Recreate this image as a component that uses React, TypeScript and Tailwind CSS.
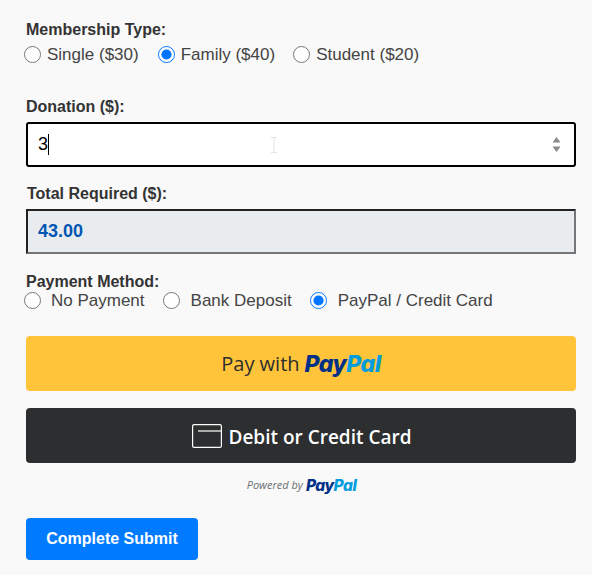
import React from "react";

function Radio({ checked, className = "" }: { checked?: boolean; className?: string }) {
  return (
    <input
      type="radio"
      readOnly
      checked={!!checked}
      className={"m-0 h-[17px] w-[17px] shrink-0 accent-[#0075ff] " + className}
    />
  );
}

function PayPalWord({ className }: { className: string }) {
  return (
    <span className={"font-['Inter',sans-serif] font-extrabold italic tracking-[-0.5px] " + className}>
      <span className="text-[#003087]">Pay</span>
      <span className="text-[#009cde]">Pal</span>
    </span>
  );
}

export default function App() {
  return (
    <div className="min-h-[575px] bg-[#f9f9f9] pl-[26px] pr-4 pt-[19px] font-['Liberation_Sans',Arial,sans-serif] text-[16px] text-[#333]">
      <div className="h-[20px] font-bold leading-[22px]">Membership Type:</div>
      <div className="mt-[5px] flex h-[20px] items-center text-[17px] text-[#444]">
        <Radio className="-ml-[2px]" />
        <span className="ml-[6px] pt-[2px] leading-[20px]">Single ($30)</span>
        <Radio checked className="ml-[19px]" />
        <span className="ml-[6px] pt-[2px] leading-[20px]">Family ($40)</span>
        <Radio className="ml-[18px]" />
        <span className="ml-[6px] pt-[2px] leading-[20px]">Student ($20)</span>
      </div>

      <div className="mt-[32px] h-[20px] font-bold leading-[22px]">Donation ($):</div>
      <div className="relative mt-[6px] flex h-[45px] w-[550px] items-center justify-between rounded-[3px] border-2 border-black bg-white pl-[10px] pr-[13px]">
        <div className="flex items-center text-[18px] text-black">
          <span>3</span>
          <span className="h-[21px] w-px bg-black" />
        </div>
        <svg className="absolute left-[243px] top-[13px]" width="7" height="16" viewBox="0 0 7 16" fill="none" stroke="#e4e4e4" aria-hidden="true">
          <path d="M0 0.500H6M3 0.500V15.500M0 15.500H6" />
        </svg>
        <svg width="9" height="17" viewBox="0 0 9 17" aria-hidden="true">
          <path d="M4.500 1 8.500 6.500H0.500Z" fill="#8a8a8a" />
          <path d="M0.500 10.500H8.500L4.500 16Z" fill="#8a8a8a" />
        </svg>
      </div>

      <div className="ml-px mt-[16px] h-[20px] font-bold leading-[22px]">Total Required ($):</div>
      <div className="mt-[6px] flex h-[45px] w-[550px] items-center border-2 border-b-[#767676] border-l-[#222] border-r-[#767676] border-t-[#222] bg-[#e9ecef] pl-[10px] text-[18px] font-bold text-[#0056b3]">
        43.00
      </div>

      <div className="mt-[17px] h-[20px] font-bold leading-[22px]">Payment Method:</div>
      <div className="flex h-[18px] items-center text-[17px] text-[#444]">
        <Radio className="-ml-[2px]" />
        <span className="ml-[10px] pt-[2px] leading-[18px]">No Payment</span>
        <Radio className="ml-[18px]" />
        <span className="ml-[11px] pt-[2px] leading-[18px]">Bank Deposit</span>
        <Radio checked className="ml-[18px]" />
        <span className="ml-[11px] pt-[2px] leading-[18px]">PayPal / Credit Card</span>
      </div>

      <div className="mt-[27px] flex h-[55px] w-[550px] items-center justify-center gap-[5px] rounded-[4px] bg-[#ffc439]">
        <span className="font-['Open_Sans',sans-serif] text-[20px] leading-[28px] text-[#2c2e2f]">Pay with</span>
        <PayPalWord className="text-[23px] leading-[26px]" />
      </div>
      <div className="mt-[17px] flex h-[55px] w-[550px] items-center justify-center gap-[6px] rounded-[4px] bg-[#2c2e2f] pl-[2px]">
        <svg width="30" height="24" viewBox="0 0 30 24" fill="none" stroke="#fff" strokeWidth="1.200" aria-hidden="true">
          <rect x="0.600" y="0.600" width="28.800" height="22.800" rx="1.500" />
          <path d="M6 7H29.400" />
        </svg>
        <span className="pt-[3px] font-['Open_Sans',sans-serif] text-[19px] font-semibold text-white">Debit or Credit Card</span>
      </div>
      <div className="mt-[13px] flex h-[18px] w-[550px] items-center justify-center gap-[3px] pl-[1px]">
        <span className="font-['Open_Sans',sans-serif] text-[11px] italic text-[#6b7074]">Powered by</span>
        <PayPalWord className="pt-[1px] text-[15.500px]" />
      </div>

      <div className="mt-[24px] flex h-[42px] w-[172px] items-center justify-center rounded-[4px] bg-[#007bff] font-bold text-white">
        Complete Submit
      </div>
    </div>
  );
}
